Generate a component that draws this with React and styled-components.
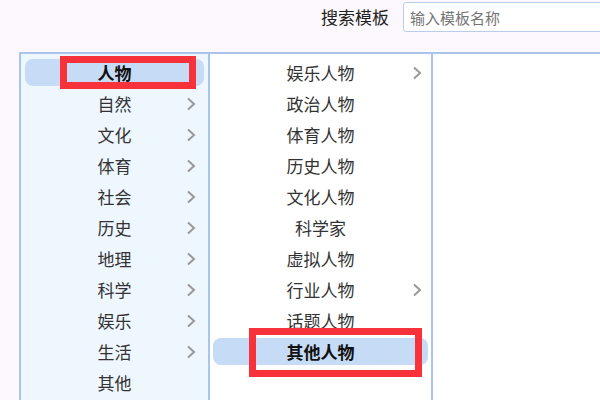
import React from 'react';
import styled, { createGlobalStyle } from 'styled-components';

const GlobalStyle = createGlobalStyle`
  html, body {
    margin: 0;
    padding: 0;
    background-color: #fdf8fd;
    font-family: "Noto Sans CJK SC", "Noto Sans", sans-serif;
    color: #333;
    overflow: hidden;
  }
`

const Page = styled.div`
  width: 600px;
  height: 400px;
  display: flex;
  flex-direction: column;
  overflow: hidden;
`

const Header = styled.div`
  height: 52px;
  display: flex;
  align-items: flex-start;
  padding-left: 321px;
  gap: 14px;
  box-sizing: border-box;
`

const SearchLabel = styled.span`
  font-size: 17px;
  line-height: 34px;
  color: #222;
  white-space: nowrap;
`

const SearchInput = styled.input`
  flex-shrink: 0;
  margin-top: 2px;
  width: 220px;
  height: 30px;
  box-sizing: border-box;
  border: 1px solid #b7cde9;
  border-radius: 3px;
  padding: 0 6px;
  font-family: inherit;
  font-size: 15px;
  background: #fff;
  outline: none;

  ::placeholder {
    color: #aaa;
  }
`

const Panel = styled.div`
  flex: 1;
  margin-left: 19px;
  display: flex;
  border-top: 2px solid #a9c5ea;
  border-left: 2px solid #a9c5ea;
`

const Column = styled.div`
  box-sizing: border-box;
  width: ${p => p.width || 'auto'};
  flex: ${p => (p.width ? 'none' : '1')};
  background-color: ${p => p.bg || '#fff'};
  border-right: ${p => (p.last ? 'none' : '2px solid #a9c5ea')};
  padding: 5px ${p => p.pad || 4}px 0;
  display: flex;
  flex-direction: column;
  gap: 4px;
`

const Row = styled.div`
  position: relative;
  height: 27px;
  border-radius: 8px;
  background-color: ${p => (p.active ? '#c6dbf5' : 'transparent')};
  display: flex;
  align-items: center;
  justify-content: center;
  font-size: 17px;
  font-weight: ${p => (p.active ? 700 : 400)};
  color: ${p => (p.active ? '#111' : '#333')};
`

const Chevron = styled.svg`
  position: absolute;
  right: ${p => p.right}px;
  top: 7px;
  width: 10px;
  height: 14px;
`

const Highlight = styled.div`
  position: absolute;
  left: ${p => p.l}px;
  right: ${p => p.r}px;
  top: ${p => p.t}px;
  bottom: ${p => p.b}px;
  border: 7px solid #f8323a;
  pointer-events: none;
`

const Arrow = ({ right }) => (
  <Chevron right={right} viewBox="0 0 10 14">
    <path d="M2 1.5 L8 7 L2 12.5" fill="none" stroke="#999" strokeWidth="2" />
  </Chevron>
)

const categories = [
  { name: '人物', active: true },
  { name: '自然', more: true },
  { name: '文化', more: true },
  { name: '体育', more: true },
  { name: '社会', more: true },
  { name: '历史', more: true },
  { name: '地理', more: true },
  { name: '科学', more: true },
  { name: '娱乐', more: true },
  { name: '生活', more: true },
  { name: '其他' },
]

const people = [
  { name: '娱乐人物', more: true },
  { name: '政治人物' },
  { name: '体育人物' },
  { name: '历史人物' },
  { name: '文化人物' },
  { name: '科学家' },
  { name: '虚拟人物' },
  { name: '行业人物', more: true },
  { name: '话题人物' },
  { name: '其他人物', active: true },
]

export default function App() {
  return (
    <Page>
      <GlobalStyle />
      <Header>
        <SearchLabel>搜索模板</SearchLabel>
        <SearchInput placeholder="输入模板名称" />
      </Header>
      <Panel>
        <Column width="189px" bg="#eef6fe" pad={4}>
          {categories.map(c => (
            <Row key={c.name} active={c.active}>
              {c.name}
              {c.more && <Arrow right={8} />}
              {c.active && <Highlight l={35} r={8} t={-3} b={-3} />}
            </Row>
          ))}
        </Column>
        <Column width="223px" pad={3}>
          {people.map(c => (
            <Row key={c.name} active={c.active}>
              {c.name}
              {c.more && <Arrow right={6} />}
              {c.active && <Highlight l={36} r={6} t={-10} b={-12} />}
            </Row>
          ))}
        </Column>
        <Column last />
      </Panel>
    </Page>
  );
}
